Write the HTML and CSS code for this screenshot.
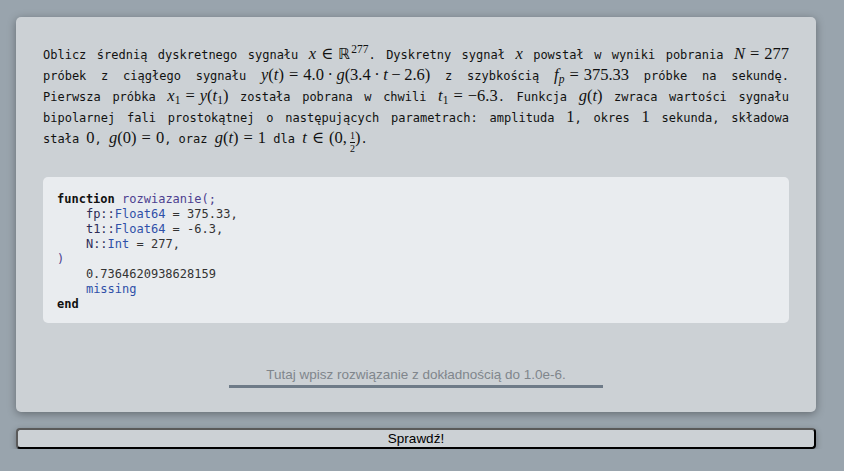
FILE: index.html
```html
<!DOCTYPE html>
<html lang="pl">
<head>
<meta charset="utf-8">
<title>Zadanie</title>
<link rel="stylesheet" href="styles.css">
</head>
<body>
<main class="page">
  <section class="card">
    <div class="task">
      <span class="line">Oblicz średnią dyskretnego sygnału <span class="m"><i>x</i><span class="rel">∈</span><span class="bb">ℝ</span><sup>277</sup></span>. Dyskretny sygnał <span class="m"><i>x</i></span> powstał w wyniki pobrania <span class="m"><i>N</i><span class="rel">=</span>277</span></span>
      <span class="line">próbek z ciągłego sygnału <span class="m"><i>y</i>(<i>t</i>)<span class="rel">=</span>4.0<span class="bin">·</span><i>g</i>(3.4<span class="bin">·</span><i>t</i><span class="bin">−</span>2.6)</span> z szybkością <span class="m"><i>f</i><sub><i>p</i></sub><span class="rel">=</span>375.33</span> próbke na sekundę.</span>
      <span class="line">Pierwsza próbka <span class="m"><i>x</i><sub>1</sub><span class="rel">=</span><i>y</i>(<i>t</i><sub>1</sub>)</span> została pobrana w chwili <span class="m"><i>t</i><sub>1</sub><span class="rel">=</span>−6.3</span>. Funkcja <span class="m"><i>g</i>(<i>t</i>)</span> zwraca wartości sygnału</span>
      <span class="line">bipolarnej fali prostokątnej o następujących parametrach: amplituda <span class="m">1</span>, okres <span class="m">1</span> sekunda, składowa</span>
      <span class="line last">stała <span class="m">0</span>, <span class="m"><i>g</i>(0)<span class="rel">=</span>0</span>, oraz <span class="m"><i>g</i>(<i>t</i>)<span class="rel">=</span>1</span> dla <span class="m"><i>t</i><span class="rel">∈</span>(0,<span class="thin"></span><span class="frac"><span class="num">1</span><span class="den">2</span></span>)</span>.</span>
    </div>

    <pre class="code"><span class="kw">function</span> <span class="fn">rozwiazanie(;</span>
    <span class="var">fp::</span><span class="ty">Float64</span> = 375.33,
    <span class="var">t1::</span><span class="ty">Float64</span> = -6.3,
    <span class="var">N::</span><span class="ty">Int</span> = 277,
<span class="fn">)</span>
    0.7364620938628159
    <span class="ty">missing</span>
<span class="kw">end</span></pre>

    <div class="answer">
      <input class="answer-input" type="text" placeholder="Tutaj wpisz rozwiązanie z dokładnością do 1.0e-6.">
    </div>
  </section>

  <button class="check" type="button">Sprawdź!</button>
</main>
</body>
</html>
```

FILE: styles.css
```css
html, body {
  margin: 0;
  padding: 0;
}

body {
  background: #99a4ad;
  font-family: "DejaVu Sans Mono", "Liberation Mono", monospace;
  color: #111;
}

.page {
  width: 800px;
  margin: 0 0 0 16px;
  padding-top: 17px;
  display: flex;
  flex-direction: column;
  gap: 16px;
}

.card {
  background: #ccd1d5;
  border-radius: 5px;
  box-shadow: 0 2px 8px rgba(0, 0, 0, 0.35);
  padding: 26px 27px 24px;
  display: flex;
  flex-direction: column;
}

.task {
  font-size: 12px;
  line-height: 21px;
  color: #111;
}

.line {
  display: block;
  text-align: justify;
  text-align-last: justify;
  height: 21px;
  white-space: nowrap;
}

.line.last {
  text-align-last: left;
}

.m {
  display: inline-block;
  font-family: "Liberation Serif", "DejaVu Serif", serif;
  font-size: 16.5px;
  line-height: 21px;
  white-space: nowrap;
  text-align: left;
  text-align-last: left;
}

.m i {
  font-style: italic;
}

.m sup,
.m sub {
  font-size: 11.5px;
  line-height: 0;
}

.m sup {
  vertical-align: 6px;
  margin-left: 1px;
}

.m sub {
  vertical-align: -3px;
}

.bb {
  font-family: "DejaVu Sans", sans-serif;
  font-size: 15px;
}

.rel {
  margin: 0 5px;
}

.bin {
  margin: 0 3.5px;
}

.thin {
  display: inline-block;
  width: 3px;
}

.frac {
  display: inline-flex;
  flex-direction: column;
  align-items: center;
  vertical-align: 4px;
  font-size: 10px;
  line-height: 8px;
}

.frac .num {
  border-bottom: 1px solid #111;
  padding: 0 0 2px;
}

.frac .den {
  padding-top: 2px;
}

.code {
  margin: 29px 0 0;
  background: #e9ecef;
  border-radius: 5px;
  padding: 15px 14px 11px;
  font-family: "DejaVu Sans Mono", "Liberation Mono", monospace;
  font-size: 12px;
  line-height: 15px;
  color: #333;
}

.kw {
  color: #111;
  font-weight: bold;
}

.fn {
  color: #4d3f8f;
}

.var {
  color: #2c2b55;
}

.ty {
  color: #2f50a8;
}

.answer {
  margin-top: 41px;
  display: flex;
  justify-content: center;
}

.answer-input {
  width: 374px;
  height: 24px;
  box-sizing: border-box;
  border: none;
  border-bottom: 3px solid #6e7b88;
  background: transparent;
  font-family: "Liberation Sans", "Arimo", sans-serif;
  font-size: 13.5px;
  text-align: center;
  color: #111;
  padding: 0 0 1px;
  outline: none;
}

.answer-input::placeholder {
  color: #80868c;
}

.check {
  width: 800px;
  height: 21px;
  box-sizing: border-box;
  background: #ccd1d5;
  border: 2px solid;
  border-color: #5a5a5a #000 #000 #5a5a5a;
  border-radius: 4px;
  box-shadow: 0 2px 6px rgba(0, 0, 0, 0.3);
  font-family: "Liberation Sans", "Arimo", sans-serif;
  font-size: 13.5px;
  line-height: 15px;
  color: #000;
  padding: 0;
}
```
